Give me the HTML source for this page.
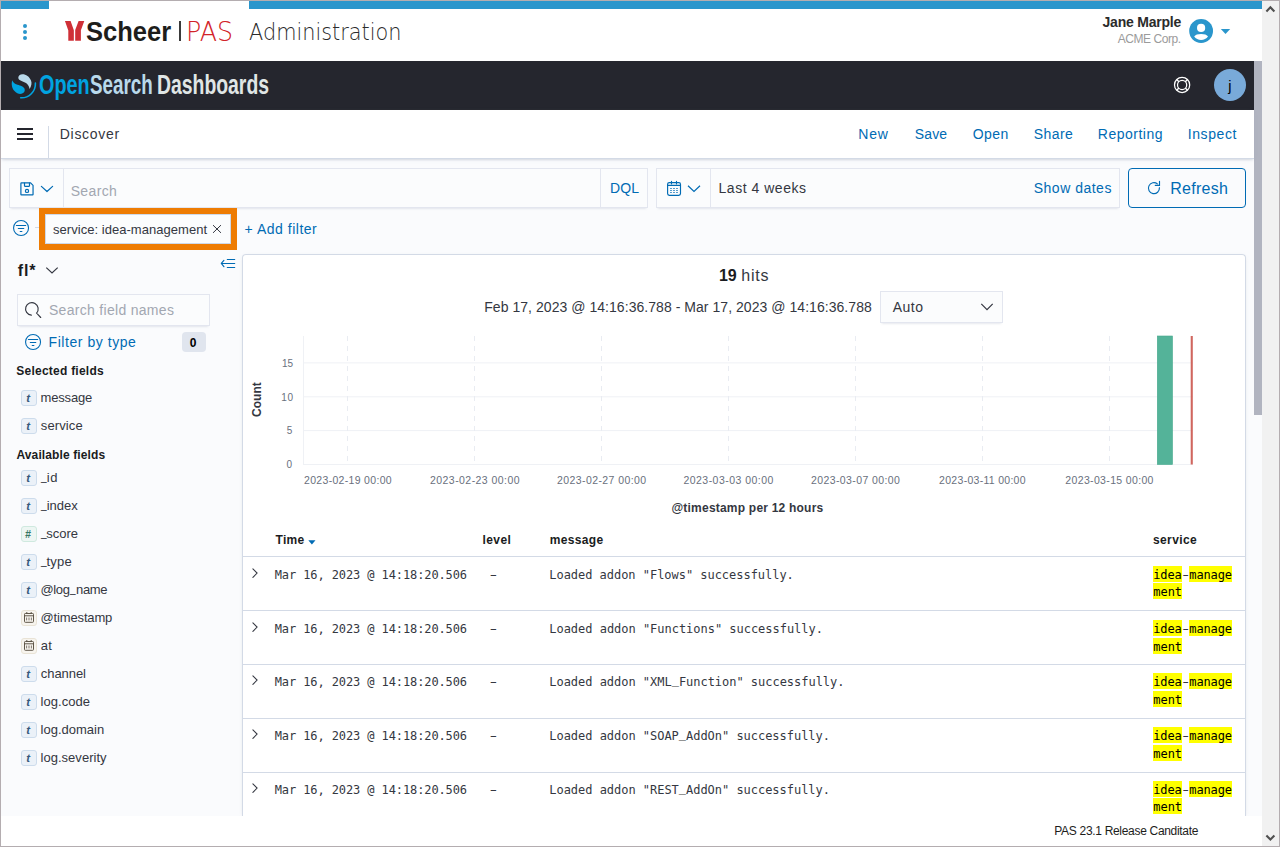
<!DOCTYPE html>
<html lang="en"><head><meta charset="utf-8"><title>Scheer PAS Administration - Discover</title>
<style>
html,body{margin:0;padding:0;background:#fff;}
body{width:1280px;height:847px;overflow:hidden;font-family:"Liberation Sans",Arial,sans-serif;color:#343741;}
header,nav,section,aside,main,footer{display:contents;}
#app{position:relative;width:1280px;height:847px;overflow:hidden;background:#fff;}
#app div,#app span.t,#app a.t,#app h1.t,#app h2.t,#app th.t,#app svg{position:absolute;box-sizing:border-box;}
#app .t{line-height:1;white-space:pre;margin:0;padding:0;text-decoration:none;color:#343741;font-weight:400;}
.lnk{color:#006bb4;}
</style></head><body><div id="app">
<div class="osd-bg" style="left:1px;top:61px;width:1261px;height:755px;background:#fafbfd;"></div>
<header class="pas-header">
<div style="left:1px;top:1px;width:48px;height:8px;background:#2a96cc;"></div>
<div style="left:249px;top:1px;width:1013px;height:8px;background:#2a96cc;"></div>
<div style="left:23px;top:24px;width:4px;height:4px;background:#2a96cc;border-radius:50%;"></div>
<div style="left:23px;top:30px;width:4px;height:4px;background:#2a96cc;border-radius:50%;"></div>
<div style="left:23px;top:36px;width:4px;height:4px;background:#2a96cc;border-radius:50%;"></div>
<svg style="left:64px;top:20px" width="22" height="22" viewBox="64 20 22 22"><polygon fill="#cf3037" points="64.950,21.100 70.600,21.100 73.850,30.200 73.850,40.800 68.300,40.800 68.300,30.500"/><polygon fill="#cf3037" points="78.600,21.100 84.300,21.100 80.900,30.200 80.900,40.800 75.200,40.800 75.200,30"/></svg>
<span class="t" style="left:86.16px;top:19px;font-size:27px;font-weight:700;color:#1d1d1b;transform:scaleX(0.9462);transform-origin:0 0;">Scheer</span>
<div style="left:179.2px;top:21px;width:1.7px;height:20px;background:#3a3a3a;"></div>
<span class="t" style="left:185.65px;top:19px;font-size:26.5px;font-family:'DejaVu Sans', 'Liberation Sans', sans-serif;font-weight:200;color:#d2232a;transform:scaleX(0.9555);transform-origin:0 0;">PAS</span>
<span class="t" style="left:248.66px;top:21px;font-size:23.5px;font-family:'DejaVu Sans', 'Liberation Sans', sans-serif;font-weight:200;color:#2b2b2b;transform:scaleX(0.8872);transform-origin:0 0;">Administration</span>
<span class="t" style="left:1102.54px;top:15px;font-size:14px;font-weight:700;color:#2b2b2b;letter-spacing:-0.215px;">Jane Marple</span>
<span class="t" style="left:1117.68px;top:33px;font-size:12px;color:#9b9b9b;letter-spacing:-0.424px;">ACME Corp.</span>
<svg style="left:1189px;top:19px" width="24" height="24" viewBox="0 0 24 24"><circle cx="12.100" cy="12" r="11.900" fill="#2a96cc"/><circle cx="12.100" cy="8.900" r="4.100" fill="#fff"/><path d="M5.200 17.500C6.100 15.600 9 14.900 12.100 14.900S18.100 15.600 19 17.500C17.500 19.800 14.900 21 12.100 21S6.700 19.800 5.200 17.500Z" fill="#fff"/></svg>
<svg style="left:1220px;top:29px" width="11" height="6" viewBox="0 0 11 6"><polygon points="0.8,0 10.2,0 5.5,5" fill="#2a96cc"/></svg>
<div style="left:1262px;top:1px;width:17px;height:845px;background:#f1f1f1;"></div>
<svg style="left:1262px;top:1px" width="17" height="17" viewBox="0 0 17 17"><path d="M4.400 10.400 8.400 6.300 12.400 10.400" fill="none" stroke="#505050" stroke-width="2.100"/></svg>
<svg style="left:1262px;top:829px" width="17" height="17" viewBox="0 0 17 17"><path d="M4.400 6.500 8.400 10.600 12.400 6.500" fill="none" stroke="#505050" stroke-width="2.100"/></svg>
</header>
<section class="osd-app">
<header class="osd-header">
<div class="osd-header" style="left:1px;top:61px;width:1253px;height:49px;background:#25262e;"></div>
<svg style="left:6px;top:68px" width="40" height="36" viewBox="6 68 40 36"><path d="M29.600 88.900C31.500 86 32 83 31 80.500 29.500 76.500 26 74.200 22.500 74.200 20 74.200 18.200 75.800 18.300 77.800 18.500 80.500 22 81 25 82.500 27.500 83.800 29 85.500 29.600 88.900Z" fill="#b9d9eb"/><path d="M12.300 80.300C11 84 12 88.500 14.500 91 16.500 93.500 19.500 94.300 21.500 93.800 24 93.200 25.300 91 24.600 89 23.800 86.500 20.500 85.800 17.500 84.800 14.500 83.800 13 82.500 12.300 80.300Z" fill="#00a3e0"/><path d="M35.400 83.100A14 14 0 0 1 20.700 97.800" fill="none" stroke="#00a3e0" stroke-width="1.600" stroke-linecap="round"/></svg>
<span class="t" style="left:39.42px;top:71px;font-size:28px;font-weight:700;color:#00a3e0;transform:scaleX(0.7072);transform-origin:0 0;">Open</span>
<span class="t" style="left:90.39px;top:71px;font-size:28px;font-weight:700;color:#b9d9eb;transform:scaleX(0.6719);transform-origin:0 0;">Search</span>
<span class="t" style="left:156.73px;top:71px;font-size:28px;font-weight:700;color:#e0e6e6;transform:scaleX(0.6924);transform-origin:0 0;">Dashboards</span>
<div style="left:1254px;top:61px;width:8px;height:354px;background:#b1b4c0;"></div>
<svg style="left:1173px;top:76px" width="19" height="19" viewBox="1173 76 19 19" fill="none" stroke="#fff" stroke-width="1.250"><circle cx="1182.100" cy="84.900" r="7.600"/><circle cx="1182.100" cy="84.900" r="4.600"/><path d="M1176.700 79.500l2.200 2.200M1187.500 79.500l-2.200 2.200M1176.700 90.300l2.200-2.200M1187.500 90.300l-2.200-2.200" stroke-width="1.400"/></svg>
<div style="left:1214px;top:69px;width:32px;height:32px;background:#79aad9;border-radius:50%;"></div>
<span class="t" style="left:1228.14px;top:79px;font-size:14.5px;color:#000;">j</span>
</header>
<nav class="osd-toolbar">
<div style="left:1px;top:110px;width:1253px;height:49px;background:#fff;border-bottom:1px solid #d3dae6;box-shadow:0 2px 2px -1px rgba(152,162,179,.3),0 1px 5px -2px rgba(152,162,179,.3);"></div>
<div style="left:17px;top:128px;width:16px;height:2px;background:#25262e;"></div>
<div style="left:17px;top:133px;width:16px;height:2px;background:#25262e;"></div>
<div style="left:17px;top:138px;width:16px;height:2px;background:#25262e;"></div>
<div style="left:48px;top:126px;width:1px;height:32px;background:#d3dae6;"></div>
<span class="t" style="left:59.75px;top:127px;font-size:14px;letter-spacing:0.706px;">Discover</span>
<a class="t" style="left:858.25px;top:127px;font-size:14px;color:#006bb4;letter-spacing:0.785px;">New</a>
<a class="t" style="left:914.64px;top:127px;font-size:14px;color:#006bb4;letter-spacing:0.201px;">Save</a>
<a class="t" style="left:972.81px;top:127px;font-size:14px;color:#006bb4;letter-spacing:0.414px;">Open</a>
<a class="t" style="left:1033.74px;top:127px;font-size:14px;color:#006bb4;letter-spacing:0.441px;">Share</a>
<a class="t" style="left:1097.75px;top:127px;font-size:14px;color:#006bb4;letter-spacing:0.517px;">Reporting</a>
<a class="t" style="left:1187.64px;top:127px;font-size:14px;color:#006bb4;letter-spacing:0.619px;">Inspect</a>
</nav>
<section class="query-bar">
<div style="left:9px;top:168px;width:639px;height:40px;background:#fbfcfd;box-shadow:0 1px 1px -1px rgba(152,162,179,.2),0 3px 2px -2px rgba(152,162,179,.2),inset 0 0 0 1px rgba(15,39,118,.1);"></div>
<div style="left:63px;top:169px;width:1px;height:38px;background:rgba(15,39,118,.1);"></div>
<div style="left:600px;top:169px;width:1px;height:38px;background:rgba(15,39,118,.1);"></div>
<svg style="left:19px;top:180px" width="36" height="18" viewBox="19 180 36 18" fill="none" stroke="#006bb4" stroke-width="1.200" stroke-linecap="round" stroke-linejoin="round"><path d="M21.400 182.900H30.600L33.050 185.350V194.450A.5.500 0 0 1 32.550 194.950H21.400A.5.500 0 0 1 20.900 194.450V183.400A.5.500 0 0 1 21.400 182.900Z"/><path d="M24.500 183V185.800A.5.500 0 0 0 25 186.300H29A.5.500 0 0 0 29.500 185.800V183"/><circle cx="27" cy="190.900" r="1.600"/><path d="M41.400 186.400 47 191.500 52.600 186.400"/></svg>
<span class="t" style="left:70.64px;top:184px;font-size:14px;color:#a2a7b1;letter-spacing:0.382px;">Search</span>
<span class="t" style="left:610.05px;top:181px;font-size:14px;color:#006bb4;letter-spacing:0.112px;">DQL</span>
<div style="left:656px;top:168px;width:464px;height:40px;background:#fbfcfd;box-shadow:0 1px 1px -1px rgba(152,162,179,.2),0 3px 2px -2px rgba(152,162,179,.2),inset 0 0 0 1px rgba(15,39,118,.1);"></div>
<div style="left:710px;top:169px;width:1px;height:38px;background:rgba(15,39,118,.1);"></div>
<svg style="left:665px;top:179px" width="18" height="18" viewBox="665 179 18 18" fill="none" stroke="#006bb4" stroke-width="1.150" stroke-linecap="round"><rect x="667.600" y="182.600" width="12.900" height="12.700" rx="1.700"/><path d="M667.600 185.400H680.500M671.500 181.300V183.800M676.500 181.300V183.800"/><path d="M670.300 188.500h1.400M673.300 188.500h1.400M676.300 188.500h1.400M670.300 190.500h1.400M673.300 190.500h1.400M676.300 190.500h1.400M670.300 192.500h1.400M673.300 192.500h1.400M676.300 192.500h1.400" stroke-width=".95" stroke-linecap="butt"/></svg>
<svg style="left:687px;top:184px" width="14" height="9" viewBox="0 0 14 9" fill="none" stroke="#006bb4" stroke-width="1.200"><path d="M1 1.800 7 7.500l6-5.700"/></svg>
<span class="t" style="left:718.55px;top:181px;font-size:14px;letter-spacing:0.520px;">Last 4 weeks</span>
<span class="t" style="left:1033.74px;top:181px;font-size:14px;color:#006bb4;letter-spacing:0.502px;">Show dates</span>
<div style="left:1128px;top:168px;width:118px;height:40px;border:1px solid #006bb4;border-radius:4px;"></div>
<svg style="left:1146px;top:179px" width="17" height="17" viewBox="1146 179 17 17" fill="none" stroke="#006bb4" stroke-width="1.150" stroke-linecap="round"><path d="M1157.400 183.900A5.500 5.500 0 1 0 1159.400 187.700"/><path d="M1159.500 181.200V185.400H1155.300"/></svg>
<span class="t" style="left:1170.14px;top:181px;font-size:16px;color:#006bb4;letter-spacing:0.302px;">Refresh</span>
</section>
<section class="filter-bar">
<svg style="left:12px;top:219px" width="18" height="18" viewBox="0 0 18 18" fill="none" stroke="#006bb4" stroke-width="1.100"><circle cx="9.050" cy="9" r="7.500"/><path d="M4.400 6.500h9.300M6.300 9.450h5.500M8.200 12.450h1.700" stroke-linecap="round"/></svg>
<div style="left:35px;top:227px;width:4px;height:1px;background:#d3dae6;"></div>
<div style="left:39px;top:208px;width:198px;height:42px;border:6px solid #ee7c03;background:#fbfcfd;"></div>
<div style="left:45px;top:214px;width:186px;height:30px;border:1px solid #ced9e9;"></div>
<span class="t" style="left:53.07px;top:223px;font-size:13px;letter-spacing:0.034px;">service: idea-management</span>
<svg style="left:212px;top:224px" width="10" height="10" viewBox="0 0 10 10" fill="none" stroke="#343741" stroke-width="1" stroke-linecap="round"><path d="M1.300 1.400l7.400 7.200M8.700 1.400 1.300 8.600"/></svg>
<span class="t" style="left:244.61px;top:222px;font-size:14px;color:#006bb4;letter-spacing:0.508px;">+ Add filter</span>
</section>
<aside class="sidebar">
<span class="t" style="left:17.85px;top:263px;font-size:16px;font-weight:700;color:#1a1c21;letter-spacing:0.771px;">fl*</span>
<svg style="left:45px;top:266px" width="14" height="9" viewBox="0 0 14 9" fill="none" stroke="#343741" stroke-width="1.200"><path d="M1.300 1.600 7 7l5.700-5.400"/></svg>
<svg style="left:219px;top:256px" width="18" height="15" viewBox="219 256 18 15" fill="none" stroke="#006bb4" stroke-width="1.150" stroke-linecap="round" stroke-linejoin="round"><path d="M227.300 259.500H234.700M221.400 263.450H234.700M227.300 267.500H234.700M223.900 260.400 221.300 263.450 223.900 266.700"/></svg>
<div style="left:17px;top:294px;width:193px;height:32px;background:#fbfcfd;box-shadow:0 1px 1px -1px rgba(152,162,179,.2),0 3px 2px -2px rgba(152,162,179,.2),inset 0 0 0 1px rgba(15,39,118,.1);"></div>
<svg style="left:24px;top:300px" width="19" height="20" viewBox="24 300 19 20" fill="none" stroke="#343741" stroke-width="1.150" stroke-linecap="round"><path d="M31.350 315.180A6.300 6.300 0 1 1 36.580 313.100L40.700 317.500"/></svg>
<span class="t" style="left:48.94px;top:303px;font-size:14px;color:#a2a7b1;letter-spacing:0.302px;">Search field names</span>
<svg style="left:24px;top:333px" width="18" height="18" viewBox="0 0 18 18" fill="none" stroke="#006bb4" stroke-width="1.100"><circle cx="9.050" cy="9" r="7.500"/><path d="M4.400 6.500h9.300M6.300 9.450h5.500M8.200 12.450h1.700" stroke-linecap="round"/></svg>
<span class="t" style="left:48.55px;top:335px;font-size:14px;color:#006bb4;letter-spacing:0.552px;">Filter by type</span>
<div style="left:182px;top:332px;width:24px;height:20px;background:#e0e5ee;border-radius:4px;"></div>
<span class="t" style="left:189.87px;top:337px;font-size:12px;font-weight:700;color:#000;">0</span>
<h2 class="t" style="left:16.28px;top:365px;font-size:12px;font-weight:700;color:#1a1c21;letter-spacing:0.241px;">Selected fields</h2>
<h2 class="t" style="left:16.50px;top:449px;font-size:12px;font-weight:700;color:#1a1c21;letter-spacing:0.110px;">Available fields</h2>
<div style="left:21px;top:390px;width:16px;height:16px;background:#ebf1f8;border:1px solid #cddcec;border-radius:3px;"></div>
<span class="t" style="left:26.19px;top:393px;font-size:11.5px;font-weight:700;font-style:italic;color:#36597d;">t</span>
<span class="t" style="left:40.57px;top:391px;font-size:13px;letter-spacing:-0.171px;">message</span>
<div style="left:21px;top:418px;width:16px;height:16px;background:#ebf1f8;border:1px solid #cddcec;border-radius:3px;"></div>
<span class="t" style="left:26.19px;top:421px;font-size:11.5px;font-weight:700;font-style:italic;color:#36597d;">t</span>
<span class="t" style="left:40.77px;top:419px;font-size:13px;letter-spacing:0.122px;">service</span>
<div style="left:21px;top:470px;width:16px;height:16px;background:#ebf1f8;border:1px solid #cddcec;border-radius:3px;"></div>
<span class="t" style="left:26.19px;top:473px;font-size:11.5px;font-weight:700;font-style:italic;color:#36597d;">t</span>
<span class="t" style="left:41.03px;top:469px;font-size:13px;transform:scaleX(0.7753);transform-origin:0 0;">_</span>
<span class="t" style="left:46.77px;top:471px;font-size:13px;letter-spacing:0.476px;">id</span>
<div style="left:21px;top:498px;width:16px;height:16px;background:#ebf1f8;border:1px solid #cddcec;border-radius:3px;"></div>
<span class="t" style="left:26.19px;top:501px;font-size:11.5px;font-weight:700;font-style:italic;color:#36597d;">t</span>
<span class="t" style="left:41.03px;top:497px;font-size:13px;transform:scaleX(0.7753);transform-origin:0 0;">_</span>
<span class="t" style="left:46.77px;top:499px;font-size:13px;letter-spacing:-0.037px;">index</span>
<div style="left:21px;top:526px;width:16px;height:16px;background:#edf6f3;border:1px solid #cfe9df;border-radius:3px;"></div>
<span class="t" style="left:25.12px;top:529px;font-size:10.5px;font-weight:700;font-style:italic;color:#387765;">#</span>
<span class="t" style="left:41.03px;top:525px;font-size:13px;transform:scaleX(0.7753);transform-origin:0 0;">_</span>
<span class="t" style="left:46.27px;top:527px;font-size:13px;letter-spacing:-0.032px;">score</span>
<div style="left:21px;top:554px;width:16px;height:16px;background:#ebf1f8;border:1px solid #cddcec;border-radius:3px;"></div>
<span class="t" style="left:26.19px;top:557px;font-size:11.5px;font-weight:700;font-style:italic;color:#36597d;">t</span>
<span class="t" style="left:41.03px;top:553px;font-size:13px;transform:scaleX(0.7753);transform-origin:0 0;">_</span>
<span class="t" style="left:46.46px;top:555px;font-size:13px;letter-spacing:0.241px;">type</span>
<div style="left:21px;top:582px;width:16px;height:16px;background:#ebf1f8;border:1px solid #cddcec;border-radius:3px;"></div>
<span class="t" style="left:26.19px;top:585px;font-size:11.5px;font-weight:700;font-style:italic;color:#36597d;">t</span>
<span class="t" style="left:40.39px;top:583px;font-size:13px;letter-spacing:-0.319px;">@log</span>
<span class="t" style="left:70.23px;top:581px;font-size:13px;transform:scaleX(0.7687);transform-origin:0 0;">_</span>
<span class="t" style="left:76.07px;top:583px;font-size:13px;letter-spacing:-0.327px;">name</span>
<div style="left:21px;top:610px;width:16px;height:16px;background:#f7f4ee;border:1px solid #e9e3d6;border-radius:3px;"></div>
<svg style="left:24px;top:612px" width="10" height="11" viewBox="0 0 10 11" fill="none" stroke="#5e5649" stroke-width="1"><rect x=".5" y="1.500" width="9" height="8.800" rx=".8"/><path d="M.5 3.800h9M2.800 0v1.500M7.200 0v1.500" /><path d="M2.600 5.500v2.900M5 5.500v2.900M7.400 5.500v2.900" stroke-width=".9" stroke-opacity=".85"/></svg>
<span class="t" style="left:40.49px;top:611px;font-size:13px;letter-spacing:-0.144px;">@timestamp</span>
<div style="left:21px;top:638px;width:16px;height:16px;background:#f7f4ee;border:1px solid #e9e3d6;border-radius:3px;"></div>
<svg style="left:24px;top:640px" width="10" height="11" viewBox="0 0 10 11" fill="none" stroke="#5e5649" stroke-width="1"><rect x=".5" y="1.500" width="9" height="8.800" rx=".8"/><path d="M.5 3.800h9M2.800 0v1.500M7.200 0v1.500" /><path d="M2.600 5.500v2.900M5 5.500v2.900M7.400 5.500v2.900" stroke-width=".9" stroke-opacity=".85"/></svg>
<span class="t" style="left:40.77px;top:639px;font-size:13px;letter-spacing:0.237px;">at</span>
<div style="left:21px;top:666px;width:16px;height:16px;background:#ebf1f8;border:1px solid #cddcec;border-radius:3px;"></div>
<span class="t" style="left:26.19px;top:669px;font-size:11.5px;font-weight:700;font-style:italic;color:#36597d;">t</span>
<span class="t" style="left:40.79px;top:667px;font-size:13px;letter-spacing:-0.058px;">channel</span>
<div style="left:21px;top:694px;width:16px;height:16px;background:#ebf1f8;border:1px solid #cddcec;border-radius:3px;"></div>
<span class="t" style="left:26.19px;top:697px;font-size:11.5px;font-weight:700;font-style:italic;color:#36597d;">t</span>
<span class="t" style="left:40.57px;top:695px;font-size:13px;letter-spacing:0.033px;">log.code</span>
<div style="left:21px;top:722px;width:16px;height:16px;background:#ebf1f8;border:1px solid #cddcec;border-radius:3px;"></div>
<span class="t" style="left:26.19px;top:725px;font-size:11.5px;font-weight:700;font-style:italic;color:#36597d;">t</span>
<span class="t" style="left:40.57px;top:723px;font-size:13px;letter-spacing:-0.006px;">log.domain</span>
<div style="left:21px;top:750px;width:16px;height:16px;background:#ebf1f8;border:1px solid #cddcec;border-radius:3px;"></div>
<span class="t" style="left:26.19px;top:753px;font-size:11.5px;font-weight:700;font-style:italic;color:#36597d;">t</span>
<span class="t" style="left:40.57px;top:751px;font-size:13px;letter-spacing:0.020px;">log.severity</span>
</aside>
<main class="discover-panel">
<div class="panel" style="left:242px;top:254px;width:1004px;height:562px;background:#fff;border:1px solid #d3dae6;border-bottom:none;border-radius:4px 4px 0 0;box-shadow:0 2px 2px -1px rgba(152,162,179,.3),0 1px 5px -2px rgba(152,162,179,.3);"></div>
<span class="t" style="left:719.09px;top:268px;font-size:16px;font-weight:700;color:#1a1c21;letter-spacing:-0.186px;">19</span>
<span class="t" style="left:741.29px;top:268px;font-size:16px;letter-spacing:0.743px;">hits</span>
<span class="t" style="left:484.25px;top:300px;font-size:14px;letter-spacing:0.046px;">Feb 17, 2023 @ 14:16:36.788 - Mar 17, 2023 @ 14:16:36.788</span>
<div style="left:880px;top:291px;width:123px;height:32px;background:#fbfcfd;box-shadow:0 1px 1px -1px rgba(152,162,179,.2),0 3px 2px -2px rgba(152,162,179,.2),inset 0 0 0 1px rgba(15,39,118,.1);"></div>
<span class="t" style="left:892.68px;top:300px;font-size:14px;letter-spacing:0.509px;">Auto</span>
<svg style="left:980px;top:302px" width="14" height="10" viewBox="0 0 14 10" fill="none" stroke="#343741" stroke-width="1.200"><path d="M1.300 1.800 7 7.600l5.700-5.800"/></svg>
<svg style="left:243px;top:330px" width="1002" height="140" viewBox="243 330 1002 140"><path d="M303.500 430.6H1193" stroke="#eff1f5" stroke-width="1"/><path d="M303.500 396.8H1193" stroke="#eff1f5" stroke-width="1"/><path d="M303.500 362.9H1193" stroke="#eff1f5" stroke-width="1"/><path d="M347.5 336V464" stroke="#e9ecf2" stroke-width="1" stroke-dasharray="5 5"/><path d="M474.5 336V464" stroke="#e9ecf2" stroke-width="1" stroke-dasharray="5 5"/><path d="M601.5 336V464" stroke="#e9ecf2" stroke-width="1" stroke-dasharray="5 5"/><path d="M728.5 336V464" stroke="#e9ecf2" stroke-width="1" stroke-dasharray="5 5"/><path d="M855.5 336V464" stroke="#e9ecf2" stroke-width="1" stroke-dasharray="5 5"/><path d="M982.5 336V464" stroke="#e9ecf2" stroke-width="1" stroke-dasharray="5 5"/><path d="M1109.5 336V464" stroke="#e9ecf2" stroke-width="1" stroke-dasharray="5 5"/><path d="M303.500 336V465M303 464.500H1193" stroke="#eff1f5" stroke-width="1" fill="none"/><rect x="1157.300" y="336" width="15.200" height="128.500" fill="#54b399" stroke="#47a88d" stroke-width=".6"/><rect x="1190.700" y="336" width="2.100" height="128.500" fill="#d0665f"/></svg>
<span class="t" style="left:281.97px;top:359px;font-size:10px;color:#69707d;letter-spacing:-0.076px;">15</span>
<span class="t" style="left:281.17px;top:393px;font-size:10px;color:#69707d;letter-spacing:0.704px;">10</span>
<span class="t" style="left:286.86px;top:426px;font-size:10px;color:#69707d;">5</span>
<span class="t" style="left:286.49px;top:460px;font-size:10px;color:#69707d;">0</span>
<span class="t" style="left:304.02px;top:474.5px;font-size:10.5px;color:#69707d;letter-spacing:0.315px;">2023-02-19 00:00</span>
<span class="t" style="left:430.02px;top:474.5px;font-size:10.5px;color:#69707d;letter-spacing:0.442px;">2023-02-23 00:00</span>
<span class="t" style="left:557.02px;top:474.5px;font-size:10.5px;color:#69707d;letter-spacing:0.409px;">2023-02-27 00:00</span>
<span class="t" style="left:683.42px;top:474.5px;font-size:10.5px;color:#69707d;letter-spacing:0.469px;">2023-03-03 00:00</span>
<span class="t" style="left:810.92px;top:474.5px;font-size:10.5px;color:#69707d;letter-spacing:0.409px;">2023-03-07 00:00</span>
<span class="t" style="left:939.12px;top:474.5px;font-size:10.5px;color:#69707d;letter-spacing:0.290px;">2023-03-11 00:00</span>
<span class="t" style="left:1065.32px;top:474.5px;font-size:10.5px;color:#69707d;letter-spacing:0.349px;">2023-03-15 00:00</span>
<span class="t" style="left:671.45px;top:502px;font-size:12px;font-weight:700;letter-spacing:0.213px;">@timestamp per 12 hours</span>
<div style="left:240px;top:394px;width:34px;height:12px;transform:rotate(-90deg);transform-origin:50% 50%;"><span class="t" style="position:absolute;left:0;top:0;font-size:12px;font-weight:700;letter-spacing:.05px;">Count</span></div>
<span class="t" style="left:275.58px;top:534px;font-size:12px;font-weight:700;color:#1a1c21;letter-spacing:0.299px;">Time</span>
<svg style="left:308px;top:540px" width="8" height="5" viewBox="0 0 8 5"><path d="M.3.300h7.200L3.900 4.400z" fill="#006bb4"/></svg>
<span class="t" style="left:482.50px;top:534px;font-size:12px;font-weight:700;color:#1a1c21;letter-spacing:0.430px;">level</span>
<span class="t" style="left:549.71px;top:534px;font-size:12px;font-weight:700;color:#1a1c21;letter-spacing:0.357px;">message</span>
<span class="t" style="left:1152.91px;top:534px;font-size:12px;font-weight:700;color:#1a1c21;letter-spacing:0.407px;">service</span>
<div style="left:243px;top:556px;width:1002px;height:1px;background:#d3dae6;"></div>
<svg style="left:251px;top:568px" width="8" height="11" viewBox="0 0 8 11" fill="none" stroke="#343741" stroke-width="1.050" stroke-linecap="round"><path d="M1.900.900 6.100 5.100 1.900 9.400"/></svg>
<span class="t" style="left:274.67px;top:569px;font-size:12px;font-family:'DejaVu Sans Mono', 'Liberation Mono', monospace;letter-spacing:-0.101px;">Mar 16, 2023 @ 14:18:20.506</span>
<span class="t" style="left:486.93px;top:569px;font-size:12px;font-family:'DejaVu Sans Mono', 'Liberation Mono', monospace;transform:scaleX(1.7631);transform-origin:0 0;">-</span>
<span class="t" style="left:549.27px;top:569px;font-size:12px;font-family:'DejaVu Sans Mono', 'Liberation Mono', monospace;letter-spacing:-0.033px;">Loaded addon &quot;Flows&quot; successfully.</span>
<div style="left:1153px;top:566px;width:29px;height:16px;background:#ff0;"></div>
<div style="left:1189px;top:566px;width:43px;height:16px;background:#ff0;"></div>
<div style="left:1153px;top:583px;width:29px;height:16px;background:#ff0;"></div>
<span class="t" style="left:1153.13px;top:569px;font-size:12px;font-family:'DejaVu Sans Mono', 'Liberation Mono', monospace;color:#000;letter-spacing:-0.093px;">idea</span>
<span class="t" style="left:1179.76px;top:569px;font-size:12px;font-family:'DejaVu Sans Mono', 'Liberation Mono', monospace;transform:scaleX(1.5672);transform-origin:0 0;">-</span>
<span class="t" style="left:1189.34px;top:569px;font-size:12px;font-family:'DejaVu Sans Mono', 'Liberation Mono', monospace;color:#000;letter-spacing:-0.126px;">manage</span>
<span class="t" style="left:1153.34px;top:586px;font-size:12px;font-family:'DejaVu Sans Mono', 'Liberation Mono', monospace;color:#000;letter-spacing:-0.050px;">ment</span>
<div style="left:243px;top:610px;width:1002px;height:1px;background:#d3dae6;"></div>
<svg style="left:251px;top:622px" width="8" height="11" viewBox="0 0 8 11" fill="none" stroke="#343741" stroke-width="1.050" stroke-linecap="round"><path d="M1.900.900 6.100 5.100 1.900 9.400"/></svg>
<span class="t" style="left:274.67px;top:623px;font-size:12px;font-family:'DejaVu Sans Mono', 'Liberation Mono', monospace;letter-spacing:-0.101px;">Mar 16, 2023 @ 14:18:20.506</span>
<span class="t" style="left:486.93px;top:623px;font-size:12px;font-family:'DejaVu Sans Mono', 'Liberation Mono', monospace;transform:scaleX(1.7631);transform-origin:0 0;">-</span>
<span class="t" style="left:549.27px;top:623px;font-size:12px;font-family:'DejaVu Sans Mono', 'Liberation Mono', monospace;letter-spacing:-0.023px;">Loaded addon &quot;Functions&quot; successfully.</span>
<div style="left:1153px;top:620px;width:29px;height:16px;background:#ff0;"></div>
<div style="left:1189px;top:620px;width:43px;height:16px;background:#ff0;"></div>
<div style="left:1153px;top:638px;width:29px;height:16px;background:#ff0;"></div>
<span class="t" style="left:1153.13px;top:623px;font-size:12px;font-family:'DejaVu Sans Mono', 'Liberation Mono', monospace;color:#000;letter-spacing:-0.093px;">idea</span>
<span class="t" style="left:1179.76px;top:623px;font-size:12px;font-family:'DejaVu Sans Mono', 'Liberation Mono', monospace;transform:scaleX(1.5672);transform-origin:0 0;">-</span>
<span class="t" style="left:1189.34px;top:623px;font-size:12px;font-family:'DejaVu Sans Mono', 'Liberation Mono', monospace;color:#000;letter-spacing:-0.126px;">manage</span>
<span class="t" style="left:1153.34px;top:641px;font-size:12px;font-family:'DejaVu Sans Mono', 'Liberation Mono', monospace;color:#000;letter-spacing:-0.050px;">ment</span>
<div style="left:243px;top:664px;width:1002px;height:1px;background:#d3dae6;"></div>
<svg style="left:251px;top:675px" width="8" height="11" viewBox="0 0 8 11" fill="none" stroke="#343741" stroke-width="1.050" stroke-linecap="round"><path d="M1.900.900 6.100 5.100 1.900 9.400"/></svg>
<span class="t" style="left:274.67px;top:676px;font-size:12px;font-family:'DejaVu Sans Mono', 'Liberation Mono', monospace;letter-spacing:-0.101px;">Mar 16, 2023 @ 14:18:20.506</span>
<span class="t" style="left:486.93px;top:676px;font-size:12px;font-family:'DejaVu Sans Mono', 'Liberation Mono', monospace;transform:scaleX(1.7631);transform-origin:0 0;">-</span>
<span class="t" style="left:549.27px;top:676px;font-size:12px;font-family:'DejaVu Sans Mono', 'Liberation Mono', monospace;letter-spacing:-0.025px;">Loaded addon &quot;XML<span style="position:relative;top:-2px">_</span>Function&quot; successfully.</span>
<div style="left:1153px;top:673px;width:29px;height:16px;background:#ff0;"></div>
<div style="left:1189px;top:673px;width:43px;height:16px;background:#ff0;"></div>
<div style="left:1153px;top:691px;width:29px;height:16px;background:#ff0;"></div>
<span class="t" style="left:1153.13px;top:676px;font-size:12px;font-family:'DejaVu Sans Mono', 'Liberation Mono', monospace;color:#000;letter-spacing:-0.093px;">idea</span>
<span class="t" style="left:1179.76px;top:676px;font-size:12px;font-family:'DejaVu Sans Mono', 'Liberation Mono', monospace;transform:scaleX(1.5672);transform-origin:0 0;">-</span>
<span class="t" style="left:1189.34px;top:676px;font-size:12px;font-family:'DejaVu Sans Mono', 'Liberation Mono', monospace;color:#000;letter-spacing:-0.126px;">manage</span>
<span class="t" style="left:1153.34px;top:694px;font-size:12px;font-family:'DejaVu Sans Mono', 'Liberation Mono', monospace;color:#000;letter-spacing:-0.050px;">ment</span>
<div style="left:243px;top:718px;width:1002px;height:1px;background:#d3dae6;"></div>
<svg style="left:251px;top:729px" width="8" height="11" viewBox="0 0 8 11" fill="none" stroke="#343741" stroke-width="1.050" stroke-linecap="round"><path d="M1.900.900 6.100 5.100 1.900 9.400"/></svg>
<span class="t" style="left:274.67px;top:730px;font-size:12px;font-family:'DejaVu Sans Mono', 'Liberation Mono', monospace;letter-spacing:-0.101px;">Mar 16, 2023 @ 14:18:20.506</span>
<span class="t" style="left:486.93px;top:730px;font-size:12px;font-family:'DejaVu Sans Mono', 'Liberation Mono', monospace;transform:scaleX(1.7631);transform-origin:0 0;">-</span>
<span class="t" style="left:549.27px;top:730px;font-size:12px;font-family:'DejaVu Sans Mono', 'Liberation Mono', monospace;letter-spacing:-0.028px;">Loaded addon &quot;SOAP<span style="position:relative;top:-2px">_</span>AddOn&quot; successfully.</span>
<div style="left:1153px;top:727px;width:29px;height:16px;background:#ff0;"></div>
<div style="left:1189px;top:727px;width:43px;height:16px;background:#ff0;"></div>
<div style="left:1153px;top:745px;width:29px;height:16px;background:#ff0;"></div>
<span class="t" style="left:1153.13px;top:730px;font-size:12px;font-family:'DejaVu Sans Mono', 'Liberation Mono', monospace;color:#000;letter-spacing:-0.093px;">idea</span>
<span class="t" style="left:1179.76px;top:730px;font-size:12px;font-family:'DejaVu Sans Mono', 'Liberation Mono', monospace;transform:scaleX(1.5672);transform-origin:0 0;">-</span>
<span class="t" style="left:1189.34px;top:730px;font-size:12px;font-family:'DejaVu Sans Mono', 'Liberation Mono', monospace;color:#000;letter-spacing:-0.126px;">manage</span>
<span class="t" style="left:1153.34px;top:748px;font-size:12px;font-family:'DejaVu Sans Mono', 'Liberation Mono', monospace;color:#000;letter-spacing:-0.050px;">ment</span>
<div style="left:243px;top:772px;width:1002px;height:1px;background:#d3dae6;"></div>
<svg style="left:251px;top:783px" width="8" height="11" viewBox="0 0 8 11" fill="none" stroke="#343741" stroke-width="1.050" stroke-linecap="round"><path d="M1.900.900 6.100 5.100 1.900 9.400"/></svg>
<span class="t" style="left:274.67px;top:784px;font-size:12px;font-family:'DejaVu Sans Mono', 'Liberation Mono', monospace;letter-spacing:-0.101px;">Mar 16, 2023 @ 14:18:20.506</span>
<span class="t" style="left:486.93px;top:784px;font-size:12px;font-family:'DejaVu Sans Mono', 'Liberation Mono', monospace;transform:scaleX(1.7631);transform-origin:0 0;">-</span>
<span class="t" style="left:549.27px;top:784px;font-size:12px;font-family:'DejaVu Sans Mono', 'Liberation Mono', monospace;letter-spacing:-0.028px;">Loaded addon &quot;REST<span style="position:relative;top:-2px">_</span>AddOn&quot; successfully.</span>
<div style="left:1153px;top:781px;width:29px;height:16px;background:#ff0;"></div>
<div style="left:1189px;top:781px;width:43px;height:16px;background:#ff0;"></div>
<div style="left:1153px;top:798px;width:29px;height:16px;background:#ff0;"></div>
<span class="t" style="left:1153.13px;top:784px;font-size:12px;font-family:'DejaVu Sans Mono', 'Liberation Mono', monospace;color:#000;letter-spacing:-0.093px;">idea</span>
<span class="t" style="left:1179.76px;top:784px;font-size:12px;font-family:'DejaVu Sans Mono', 'Liberation Mono', monospace;transform:scaleX(1.5672);transform-origin:0 0;">-</span>
<span class="t" style="left:1189.34px;top:784px;font-size:12px;font-family:'DejaVu Sans Mono', 'Liberation Mono', monospace;color:#000;letter-spacing:-0.126px;">manage</span>
<span class="t" style="left:1153.34px;top:801px;font-size:12px;font-family:'DejaVu Sans Mono', 'Liberation Mono', monospace;color:#000;letter-spacing:-0.050px;">ment</span>
</main>
</section>
<footer class="pas-footer">
<div style="left:1px;top:816px;width:1261px;height:30px;background:#fff;"></div>
<span class="t" style="left:1054.31px;top:825px;font-size:12px;color:#1d1d1b;letter-spacing:-0.310px;">PAS 23.1 Release Canditate</span>
<div style="left:0px;top:0px;width:1280px;height:847px;border:1px solid #b4adb0;pointer-events:none;"></div>
</footer>
</div></body></html>
